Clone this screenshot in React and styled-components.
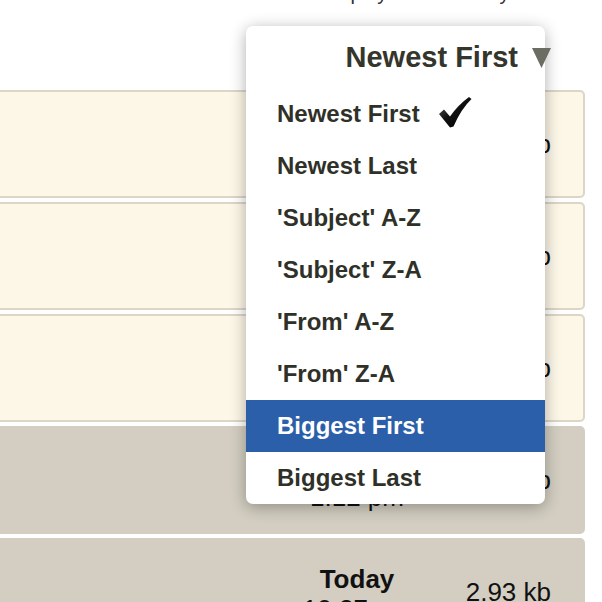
import React from "react";
import styled, { createGlobalStyle } from "styled-components";

const GlobalStyle = createGlobalStyle`
  body {
    margin: 0;
    background: #ffffff;
    font-family: "Liberation Sans", Arial, sans-serif;
    overflow: hidden;
  }
`;

const Page = styled.div`
  position: relative;
  width: 602px;
  height: 602px;
  overflow: hidden;
`;

const Caption = styled.div`
  margin-top: -18px;
  height: 22px;
  padding-right: 48px;
  text-align: right;
  font-size: 20px;
  color: #333;
  white-space: nowrap;
`;

const List = styled.div`
  margin-top: 86px;
  margin-left: -12px;
  margin-right: 17px;
  display: flex;
  flex-direction: column;
  gap: 4px;
`;

const Row = styled.div`
  box-sizing: border-box;
  height: 108px;
  border: 2px solid ${(p) => (p.$read ? "#d3cec1" : "#ddd6c7")};
  border-radius: 5px;
  background: ${(p) => (p.$read ? "#d3cec1" : "#fdf7e8")};
  display: flex;
  justify-content: flex-end;
  align-items: center;
  padding-right: 32px;
  flex-shrink: 0;
`;

const DateCell = styled.div`
  width: 176px;
  text-align: center;
  font-size: 26px;
  line-height: 30px;
  color: #111;
  padding-top: 4px;
  b {
    display: block;
  }
`;

const SizeCell = styled.div`
  width: 106px;
  text-align: right;
  font-size: 26px;
  color: #111;
`;

const Menu = styled.div`
  position: absolute;
  top: 26px;
  left: 246px;
  width: 299px;
  background: #ffffff;
  border-radius: 7px;
  box-shadow: 0 3px 16px rgba(0, 0, 0, 0.32);
`;

const MenuHead = styled.div`
  height: 62px;
  display: flex;
  justify-content: flex-end;
  align-items: center;
  gap: 14px;
  font-size: 29px;
  font-weight: 700;
  color: #34352b;
  svg {
    margin-right: -6px;
    margin-top: 2px;
  }
`;

const Item = styled.div`
  height: 52px;
  display: flex;
  align-items: center;
  padding-left: 31px;
  font-size: 24px;
  font-weight: 700;
  color: ${(p) => (p.$active ? "#ffffff" : "#2f3128")};
  background: ${(p) => (p.$active ? "#2b5fa9" : "transparent")};
  &:last-child {
    border-radius: 0 0 7px 7px;
  }
`;

const Check = styled.svg`
  margin-left: 19px;
  margin-top: -4px;
`;

const rows = [
  { read: false, time: "3:48 pm", size: "4.10 kb" },
  { read: false, time: "2:31 pm", size: "6.52 kb" },
  { read: false, time: "1:57 pm", size: "3.08 kb" },
  { read: true, time: "1:12 pm", size: "5.40 kb" },
  { read: true, time: "10:27 am", size: "2.93 kb" },
];

const options = [
  "Newest First",
  "Newest Last",
  "'Subject' A-Z",
  "'Subject' Z-A",
  "'From' A-Z",
  "'From' Z-A",
  "Biggest First",
  "Biggest Last",
];

export default function App() {
  return (
    <Page>
      <GlobalStyle />
      <Caption>1 - 5 of 5 displayed · sorted by date</Caption>
      <List>
        {rows.map((r, i) => (
          <Row key={i} $read={r.read}>
            <DateCell>
              <b>Today</b>
              {r.time}
            </DateCell>
            <SizeCell>{r.size}</SizeCell>
          </Row>
        ))}
      </List>
      <Menu>
        <MenuHead>
          Newest First
          <svg width="19" height="20" viewBox="0 0 19 20">
            <polygon points="0,0 19,0 9.5,20" fill="#6b6c62" />
          </svg>
        </MenuHead>
        {options.map((o, i) => (
          <Item key={o} $active={o === "Biggest First"}>
            {o}
            {i === 0 && (
              <Check width="33" height="31" viewBox="0 0 33 31">
                <defs>
                  <linearGradient id="ck" x1="0" y1="0" x2="1" y2="1">
                    <stop offset="0" stopColor="#666" />
                    <stop offset="0.45" stopColor="#111" />
                    <stop offset="1" stopColor="#000" />
                  </linearGradient>
                </defs>
                <path
                  d="M0 17 L5 12.5 L11 19.5 Q19 8 30 0 L32.5 2 Q22 12 14.5 29.5 L11 30.5 Z"
                  fill="url(#ck)"
                />
              </Check>
            )}
          </Item>
        ))}
      </Menu>
    </Page>
  );
}
